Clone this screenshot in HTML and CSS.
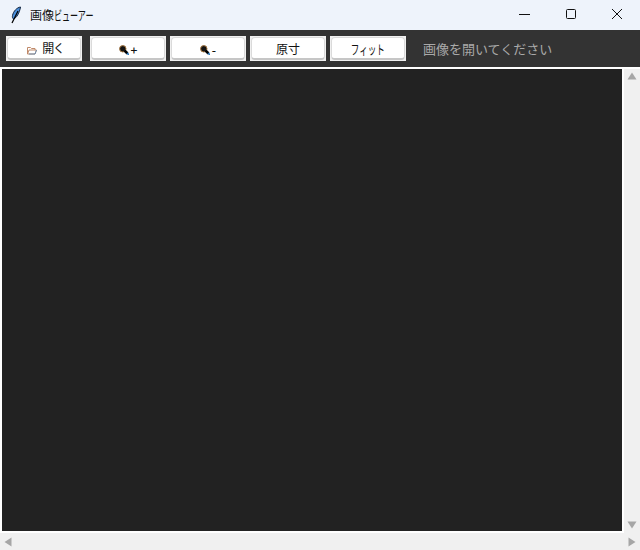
FILE: index.html
```html
<!DOCTYPE html>
<html lang="ja">
<head>
<meta charset="utf-8">
<title>画像ビューアー</title>
<link rel="stylesheet" href="styles.css">
</head>
<body>
<div class="window">
  <header class="titlebar">
    <svg class="app-icon" width="12" height="18" viewBox="0 0 12 18"><path d="M10.500 1C7 1.500 3.500 5 2.500 9.500C2.200 11 2.500 12.500 3.500 13C6.500 12 9.500 7 10.500 1Z" fill="#4a8fdc" stroke="#10233f" stroke-width="1"/><path d="M8 5L2 17" stroke="#000" stroke-width="1.200" fill="none"/></svg>
    <span class="title">画像<span class="kana-title">ビューアー</span></span>
    <div class="win-controls">
      <svg class="win-btn" width="46" height="30" viewBox="0 0 46 30"><path d="M17 14.500H28" stroke="#111" stroke-width="1"/></svg>
      <svg class="win-btn" width="46" height="30" viewBox="0 0 46 30"><rect x="18.500" y="9.500" width="9" height="9" rx="1" fill="none" stroke="#111" stroke-width="1"/></svg>
      <svg class="win-btn" width="46" height="30" viewBox="0 0 46 30"><path d="M18 9L28 19M28 9L18 19" stroke="#111" stroke-width="1"/></svg>
    </div>
  </header>
  <nav class="toolbar">
    <button class="btn btn-open"><span class="face face-open"><svg class="folder" width="10" height="9" viewBox="0 0 10 9"><path d="M0.500 8V1.500H3.500L4.500 2.500H8V4M0.500 8L2 4H9.500L8 8Z" fill="#fff" stroke="#c08a6a" stroke-width="1"/><path d="M2 8H8L9.500 4" fill="none" stroke="#6f8fb0" stroke-width="1"/></svg><span class="open-label">開く</span></span></button>
    <button class="btn"><span class="face face-zoom"><svg width="10" height="10" viewBox="0 0 10 10"><circle cx="3.800" cy="3.800" r="3.200" fill="#141414" stroke="#a87840" stroke-width="1"/><path d="M5.500 5.500L8.500 8.500" stroke="#000" stroke-width="2.600"/><path d="M8 8L9.800 9.800" stroke="#1a6ab0" stroke-width="1.600"/></svg><span class="zoom-sign">+</span></span></button>
    <button class="btn"><span class="face face-zoom"><svg width="10" height="10" viewBox="0 0 10 10"><circle cx="3.800" cy="3.800" r="3.200" fill="#141414" stroke="#a87840" stroke-width="1"/><path d="M5.500 5.500L8.500 8.500" stroke="#000" stroke-width="2.600"/><path d="M8 8L9.800 9.800" stroke="#1a6ab0" stroke-width="1.600"/></svg><span class="zoom-sign">-</span></span></button>
    <button class="btn"><span class="face">原寸</span></button>
    <button class="btn"><span class="face"><span class="kana-fit">フィット</span></span></button>
    <span class="status">画像を開いてください</span>
  </nav>
  <main class="viewer">
    <div class="canvas-row">
      <div class="canvas"></div>
      <div class="vscroll">
        <svg width="10" height="8" viewBox="0 0 10 8"><path d="M5 0.500L9.500 7.500H0.500Z" fill="#a6a6a6"/></svg>
        <svg width="10" height="8" viewBox="0 0 10 8"><path d="M5 7.500L9.500 0.500H0.500Z" fill="#a6a6a6"/></svg>
      </div>
    </div>
    <div class="hscroll">
      <svg width="8" height="10" viewBox="0 0 8 10"><path d="M0.500 5L7.500 0.500V9.500Z" fill="#a6a6a6"/></svg>
      <svg width="8" height="10" viewBox="0 0 8 10"><path d="M7.500 5L0.500 0.500V9.500Z" fill="#a6a6a6"/></svg>
    </div>
  </main>
</div>
</body>
</html>
```
FILE: styles.css
```css
* { box-sizing: border-box; }
html, body { margin: 0; padding: 0; }
body {
  width: 640px;
  height: 550px;
  overflow: hidden;
  font-family: "Noto Sans CJK JP", "Noto Sans", sans-serif;
  background: #fff;
}
.window { display: flex; flex-direction: column; height: 550px; }
.titlebar {
  height: 30px;
  flex: none;
  display: flex;
  align-items: center;
  background: #eef3fb;
  padding-left: 10px;
}
.app-icon { flex: none; }
.title { margin-left: 8px; font-size: 12px; line-height: 18px; color: #111; white-space: nowrap; }
.kana-title {
  display: inline-block;
  font-size: 13px;
  line-height: 18px;
  transform: scaleX(0.62);
  transform-origin: left center;
}
.win-controls { margin-left: auto; display: flex; }
.win-btn { display: block; }
.toolbar {
  height: 37px;
  flex: none;
  display: flex;
  align-items: center;
  padding: 0 0 0 6px;
  gap: 4px;
  background: #333333;
}
.btn {
  width: 76px;
  height: 25px;
  padding: 1px;
  display: flex;
  background: #f0f0f0;
  border: 0;
  border-radius: 0;
  font-family: inherit;
  font-size: 12px;
  color: #111;
}
.face {
  flex: 1;
  display: flex;
  align-items: center;
  justify-content: center;
  background: #fff;
  border: 1px solid #dadada;
  border-bottom: 2px solid #c6c6c6;
  border-radius: 4px;
}
.btn-open { margin-right: 4px; }
.face-open { gap: 5px; padding-left: 3px; }
.folder { margin-top: 5px; }
.open-label { letter-spacing: -1.2px; margin-top: -2px; }
.face-zoom { gap: 2px; padding-top: 3px; }
.zoom-sign { font-weight: 500; line-height: 10px; }
.kana-fit { display: inline-block; font-size: 13px; transform: scaleX(0.66); }
.status { margin-left: 13px; font-size: 13px; color: #a9a9a9; }
.viewer { flex: 1; display: flex; flex-direction: column; min-height: 0; background: #fff; }
.canvas-row { flex: 1; display: flex; min-height: 0; padding-top: 2px; }
.canvas { width: 620px; margin-left: 2px; margin-bottom: 2px; background: #222222; }
.vscroll {
  width: 16px;
  margin-left: 2px;
  display: flex;
  flex-direction: column;
  justify-content: space-between;
  align-items: center;
  padding: 3px 0 4px;
  background: #f0f0f0;
}
.vscroll svg, .hscroll svg { display: block; }
.hscroll {
  height: 17px;
  flex: none;
  display: flex;
  justify-content: space-between;
  align-items: center;
  padding: 0 4px;
  background: #f0f0f0;
}
```
